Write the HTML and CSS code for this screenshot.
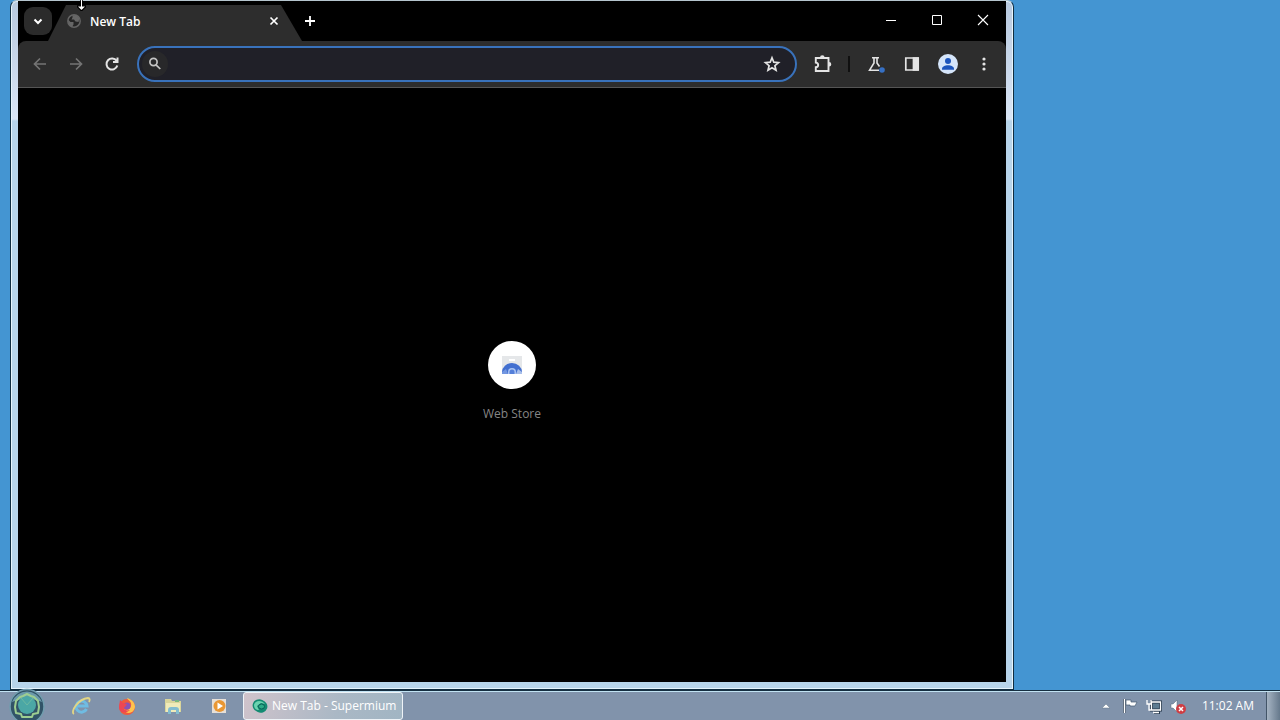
FILE: index.html
```html
<!DOCTYPE html>
<html lang="en">
<head>
    <meta charset="UTF-8">
    <meta name="viewport" content="width=device-width, initial-scale=1.0">
    <title>New Tab - Supermium</title>
    <link rel="stylesheet" href="styles.css">
</head>
<body>
    <div class="desktop">
        <main class="window">
            <div class="browser">
                <header class="titlebar">
                    <button class="tab-search" aria-label="Search tabs">
                        <svg width="28" height="28" viewBox="0 0 28 28"><path d="M10.500 12.500l3.500 3.500 3.500-3.500" fill="none" stroke="#fff" stroke-width="2"/></svg>
                    </button>
                    <div class="tab">
                        <svg class="tab-icon" width="16" height="16" viewBox="0 0 16 16">
                            <circle cx="8" cy="8" r="6.2" fill="#252525" stroke="#646464" stroke-width="1.5"/>
                            <path d="M2 6.5L4.5 9h3v2.5L6 14C3.5 13 1.8 10.5 2 6.500zM6.500 2.200L10 2l3.500 3-1 4-3-.5-1.500-2H5.500l1-2z" fill="#666"/>
                        </svg>
                        <span class="tab-title">New Tab</span>
                        <button class="tab-close" aria-label="Close tab">
                            <svg width="16" height="16" viewBox="0 0 16 16"><path d="M4.500 4.500l7 7M11.500 4.500l-7 7" stroke="#fff" stroke-width="1.700"/></svg>
                        </button>
                    </div>
                    <button class="new-tab" aria-label="New tab">
                        <svg width="16" height="16" viewBox="0 0 16 16"><path d="M8 3v10M3 8h10" stroke="#fff" stroke-width="1.800"/></svg>
                    </button>
                    <div class="caption-buttons">
                        <button class="caption-btn" aria-label="Minimize"><svg width="12" height="12" viewBox="0 0 12 12"><path d="M1 6.500h10" stroke="#fff"/></svg></button>
                        <button class="caption-btn" aria-label="Maximize"><svg width="12" height="12" viewBox="0 0 12 12"><path d="M1.500 1.500h9v9h-9z" fill="none" stroke="#fff"/></svg></button>
                        <button class="caption-btn" aria-label="Close"><svg width="12" height="12" viewBox="0 0 12 12"><path d="M1 1l10 10M11 1L1 11" stroke="#fff" stroke-width="1.100"/></svg></button>
                    </div>
                </header>

                <nav class="toolbar">
                    <button class="tool dim" aria-label="Back"><svg width="20" height="20" viewBox="0 0 20 20"><path d="M16 10H4.500M10 4.500L4.500 10l5.500 5.500"/></svg></button>
                    <button class="tool dim" aria-label="Forward"><svg width="20" height="20" viewBox="0 0 20 20"><path d="M4 10h11.500M10 4.500l5.500 5.500-5.500 5.500"/></svg></button>
                    <button class="tool" aria-label="Reload"><svg width="20" height="20" viewBox="0 0 20 20"><path d="M14.600 7A5.500 5.500 0 1 0 15.300 11.500M15.500 3.500v4.500H11" stroke-width="2"/></svg></button>
                    <div class="omnibox">
                        <span class="search-chip">
                            <svg width="16" height="16" viewBox="0 0 16 16"><circle cx="6.500" cy="6" r="3.600"/><path d="M9 8.800l4.300 4.200"/></svg>
                        </span>
                        <input type="text" class="address" aria-label="Address and search bar">
                        <button class="star" aria-label="Bookmark this tab"><svg width="20" height="20" viewBox="0 0 20 20"><path d="M10 3.800l1.800 4.400 4.700.4-3.600 3.100 1.100 4.600-4-2.500-4 2.500 1.100-4.600-3.600-3.100 4.700-.4z"/></svg></button>
                    </div>
                    <button class="tool" aria-label="Extensions"><svg width="20" height="20" viewBox="0 0 20 20"><path d="M2.800 4h12.700v13H2.800v-3.800c3.200-.4 3.200-4.200 0-4.600z" stroke-width="1.900"/><path d="M7 3.600a2.300 2.300 0 0 1 4.600 0zM16 8a2.300 2.300 0 0 1 0 4.600z" fill="#e4e4e4" stroke="none"/></svg></button>
                    <span class="divider"></span>
                    <button class="tool" aria-label="Experiments"><svg width="20" height="20" viewBox="0 0 20 20"><path d="M6 3.800h7M8 4v5l-4.400 7.200h9.400M11 4v5l2.500 3.500" stroke-width="1.600"/><circle cx="16" cy="16" r="2.800" fill="#3670c4" stroke="none"/></svg></button>
                    <button class="tool" aria-label="Side panel"><svg width="20" height="20" viewBox="0 0 20 20"><path d="M3.800 4h12.400v12H3.800z"/><path d="M11.500 4H16v12h-4.500z" fill="#e4e4e4"/></svg></button>
                    <button class="tool" aria-label="Profile"><svg width="20" height="20" viewBox="0 0 20 20"><circle cx="10" cy="10" r="10" fill="#d5e5fa" stroke="none"/><circle cx="10" cy="7" r="3" fill="#1c55bd" stroke="none"/><path d="M4 15.800v-1c0-4.800 12-4.800 12 0v1z" fill="#1c55bd" stroke="none"/></svg></button>
                    <button class="tool" aria-label="Menu"><svg width="20" height="20" viewBox="0 0 20 20"><g fill="#e4e4e4" stroke="none"><circle cx="10" cy="5" r="1.600"/><circle cx="10" cy="10" r="1.600"/><circle cx="10" cy="15" r="1.600"/></g></svg></button>
                </nav>

                <section class="page">
                    <a class="shortcut" href="#">
                        <span class="shortcut-icon">
                            <svg width="24" height="24" viewBox="0 0 24 24">
                                <path d="M2 3h20v18H2z" fill="#e5e7e9"/>
                                <path d="M9 6h6v2H9z" fill="#fff"/>
                                <path d="M2 21v-2a10 9 0 0 1 20 0v2z" fill="#426fd0"/>
                                <path d="M2 21v-2l4-3 2 5z" fill="#7397e1"/>
                                <path d="M16 21l2-5 4 3v2z" fill="#a9bfea"/>
                                <path d="M8 21v-2a4 4 0 0 1 8 0v2z" fill="#a9c3f2"/>
                                <path d="M9.500 21v-2a2.500 2.500 0 0 1 5 0v2z" fill="#547fd9"/>
                            </svg>
                        </span>
                        <span class="shortcut-label">Web Store</span>
                    </a>
                </section>
            </div>
        </main>

        <footer class="taskbar">
            <button class="start" aria-label="Start">
                <svg width="38" height="36" viewBox="0 0 38 36">
                    <circle cx="19" cy="18.500" r="17" fill="#315367" stroke="#719dae" stroke-width="1.500"/>
                    <path d="M4 14a16 16 0 0 1 30 0c-9-4-21-4-30 0z" fill="#6b9aaa"/>
                    <circle cx="19" cy="17" r="9" fill="#4ba7a5"/>
                    <path d="M14 29h10l1-3 5-1 1-6-1-6-4-4-3-1-4-2-4 2-3 1-4 4-1 6 1 6 5 1z" fill="none" stroke="#9dce91" stroke-width="2" stroke-linejoin="round"/>
                    <path d="M13 10l6 7 6-7" stroke="#6db9a2" fill="none"/>
                </svg>
            </button>
            <div class="pinned">
                <button class="pin" aria-label="Internet Explorer">
                    <svg width="20" height="20" viewBox="0 0 20 20">
                        <path d="M15.500 13a5.500 5.500 0 1 1 .5-3H6" fill="none" stroke="#6fbce2" stroke-width="3"/>
                        <path d="M3 18C-1 16 7 3 17 2c2 0 2 2 1 4" fill="none" stroke="#e1d584" stroke-width="1.800"/>
                    </svg>
                </button>
                <button class="pin" aria-label="Firefox">
                    <svg width="20" height="20" viewBox="0 0 20 20">
                        <circle cx="10" cy="11" r="8" fill="#f05a3c"/>
                        <path d="M10 2c1 3 5 3 4 8-1 4-5 5-8 3 3 6 11 5 12-2 0-5-4-8-8-9z" fill="#ffc34d"/>
                        <circle cx="10" cy="10" r="3.500" fill="#8a53b5"/>
                        <path d="M2 11l1-7 3 3 4 1-2 3-2 1c1 2 4 3 7 2-4 4-11 3-11-3z" fill="#ed4754"/>
                    </svg>
                </button>
                <button class="pin" aria-label="Windows Explorer">
                    <svg width="20" height="20" viewBox="0 0 20 20">
                        <path d="M2 3h6l1 2h9v11H2z" fill="#d9d59b"/>
                        <path d="M3 7h14v9H3z" fill="#f0ebb9"/>
                        <path d="M12 4h4v2h-4z" fill="#7ab782"/>
                        <path d="M5 18v-4q0-3 3-3h5q3 0 3 3v4h-3v-4H8v4z" fill="#83bdd0"/>
                    </svg>
                </button>
                <button class="pin" aria-label="Media Player">
                    <svg width="20" height="20" viewBox="0 0 20 20">
                        <path d="M3 3h14v14H3z" fill="#e6dfd7"/>
                        <circle cx="10.500" cy="10" r="6" fill="#e99733"/>
                        <path d="M8.500 6.500l5.500 3.500-5.500 3.500z" fill="#fff"/>
                    </svg>
                </button>
            </div>
            <button class="task">
                <svg width="16" height="16" viewBox="0 0 16 16">
                    <ellipse cx="8" cy="8" rx="7.500" ry="6.500" fill="#148b72" transform="rotate(20 8 8)"/>
                    <path d="M2 7c1-5 8-5 11-1l-4-1-4 3 2 4C4 12 2 10 2 7z" fill="#6bd3b0"/>
                    <ellipse cx="9.500" cy="8.500" rx="3" ry="2.500" fill="#2cab87" stroke="#085f55"/>
                </svg>
                <span class="task-title">New Tab - Supermium</span>
            </button>
            <div class="tray">
                <button class="tray-btn" aria-label="Show hidden icons"><svg width="16" height="16" viewBox="0 0 16 16"><path d="M4 10l4-4 4 4z" fill="#fff" stroke="#667889" stroke-width=".5"/></svg></button>
                <button class="tray-btn" aria-label="Action Center"><svg width="16" height="16" viewBox="0 0 16 16"><path d="M2.500 1v14" stroke="#34465a" stroke-width="3"/><path d="M2.500 1v14" stroke="#fff" stroke-width="1.500"/><path d="M4 2h5v2h6l-2 4H8V7H4z" fill="#fff" stroke="#435a70" stroke-width=".7"/></svg></button>
                <button class="tray-btn" aria-label="Network"><svg width="16" height="16" viewBox="0 0 16 16"><path d="M5.500 4h9v8h-9zM8 14.500h6" fill="#5d7c91" stroke="#26394d" stroke-width="3"/><path d="M5.500 4h9v8h-9zM7 14.500h6M1 2v4h4V2M3 6v6h2" fill="none" stroke="#fff" stroke-width="1.300"/></svg></button>
                <button class="tray-btn" aria-label="Volume muted"><svg width="16" height="16" viewBox="0 0 16 16"><path d="M1 6h2l4-4v12l-4-4H1z" fill="#fff" stroke="#506579" stroke-width=".5"/><circle cx="11" cy="11" r="5" fill="#cf3d43"/><path d="M9 9l4 4M13 9l-4 4" stroke="#fff" stroke-width="1.500"/></svg></button>
                <time class="clock">11:02 AM</time>
                <button class="show-desktop" aria-label="Show desktop"></button>
            </div>
        </footer>

        <!-- resize pointer on the window's top edge -->
        <svg class="pointer" width="9" height="11" viewBox="0 0 9 11"><path d="M4.500 0v8M1 6.500h7L4.500 10z" stroke="#000" stroke-width="2.500"/><path d="M4.500 0v8" stroke="#fff"/><path d="M1 6.500h7L4.500 10z" fill="#fff"/></svg>
    </div>
</body>
</html>
```

FILE: styles.css
```css
* {
    box-sizing: border-box;
}
body {
    margin: 0;
    font-family: "Open Sans", "Noto Sans", sans-serif;
    font-size: 12px;
    color: #fff;
}
button {
    display: flex;
    align-items: center;
    justify-content: center;
    flex-shrink: 0;
    padding: 0;
    border: none;
    background: none;
    color: inherit;
    font: inherit;
}
svg {
    display: block;
    flex-shrink: 0;
}
.desktop {
    position: relative;
    display: flex;
    flex-direction: column;
    height: 100vh;
    overflow: hidden;
    background: #4495d2;
}

/* browser window */
.window {
    display: flex;
    flex: 1;
    min-height: 0;
    margin: 0 266px 0 10px;
    padding: 0 7px 7px;
    border: 1px solid #102d40;
    border-top-color: #b5c5ce;
    border-radius: 7px 7px 0 0;
    background: linear-gradient(#b7c9df, #d9e5f5 118px, #b7d4ea 120px);
    box-shadow: inset 0 0 0 1px #e6f4fc;
}
.browser {
    display: flex;
    flex: 1;
    flex-direction: column;
    min-width: 0;
    background: #000;
}
.titlebar {
    display: flex;
    height: 40px;
    padding-left: 6px;
}
.tab-search {
    width: 28px;
    height: 28px;
    margin-top: 6px;
    border-radius: 9px;
    background: #2b2b2b;
}
.tab {
    display: flex;
    align-items: center;
    gap: 8px;
    width: 254px;
    height: 36px;
    margin: 4px 0 0 -4px;
    padding: 0 20px 4px 18px;
    background: #2d2d2d;
    clip-path: polygon(18px 0, 233px 0, 100% 100%, 0 100%);
}
.tab-title {
    flex: 1;
    font-weight: 600;
}
.new-tab {
    width: 16px;
    height: 40px;
}
.caption-buttons {
    display: flex;
    margin-left: auto;
}
.caption-btn {
    width: 46px;
    height: 38px;
}
.toolbar {
    display: flex;
    align-items: center;
    gap: 8px;
    height: 47px;
    padding: 0 8px;
    border-bottom: 1px solid #555;
    border-radius: 8px 8px 0 0;
    background: #2d2d2d;
}
.tool {
    width: 28px;
    height: 28px;
}
.tool svg,
.star svg,
.search-chip svg {
    fill: none;
    stroke: #e4e4e4;
    stroke-width: 1.7;
}
.search-chip svg {
    stroke: #c4c4c4;
}
.dim svg {
    stroke: #747474;
}
.omnibox {
    display: flex;
    flex: 1;
    align-items: center;
    height: 36px;
    margin: 0 4px 0 3px;
    padding: 0 13px 0 3px;
    border: 2px solid #3972bb;
    border-radius: 18px;
    background: #202028;
}
.search-chip {
    display: flex;
    align-items: center;
    justify-content: center;
    width: 26px;
    height: 26px;
    border-radius: 13px;
    background: #28282a;
}
.address {
    flex: 1;
    min-width: 0;
    padding: 0 8px;
    border: none;
    outline: none;
    background: none;
    color: #fff;
    font: inherit;
}
.divider {
    width: 2px;
    height: 16px;
    margin: 0 4px 0 3px;
    background: #101010;
}
.page {
    display: flex;
    flex: 1;
    align-items: center;
    justify-content: center;
}
.shortcut {
    display: flex;
    flex-direction: column;
    align-items: center;
    gap: 17px;
    margin-bottom: 7px;
    color: #858585;
    text-decoration: none;
}
.shortcut-icon {
    display: flex;
    align-items: center;
    justify-content: center;
    width: 48px;
    height: 48px;
    border-radius: 50%;
    background: #fff;
}
.shortcut-label {
    line-height: 16px;
}

/* taskbar */
.taskbar {
    display: flex;
    align-items: center;
    height: 30px;
    border-top: 1px solid #152e40;
    background: #8193ab;
    box-shadow: inset 0 1px 0 #c1e2f2;
}
.start {
    width: 38px;
    height: 36px;
    margin: 0 12px 0 8px;
}
.pinned {
    display: flex;
}
.pin {
    width: 46px;
    height: 28px;
}
.task {
    justify-content: flex-start;
    gap: 4px;
    width: 160px;
    height: 28px;
    margin-left: 1px;
    padding: 0 8px;
    border: 1px solid #eef3f7;
    border-radius: 3px;
    background: linear-gradient(110deg, #d0c3cb, #aab8c5 60%, #a1b5c3);
}
.task-title {
    white-space: nowrap;
}
.tray {
    display: flex;
    align-items: center;
    height: 100%;
    gap: 8px;
    margin-left: auto;
}
.tray-btn {
    width: 16px;
    height: 28px;
}
.clock {
    padding: 0 4px 0 8px;
}
.show-desktop {
    width: 14px;
    height: 28px;
    border-left: 1px solid #435568;
    background: linear-gradient(90deg, #a5b3c2, #66798c);
}
.pointer {
    position: absolute;
    top: 0;
    left: 77px;
}
```
